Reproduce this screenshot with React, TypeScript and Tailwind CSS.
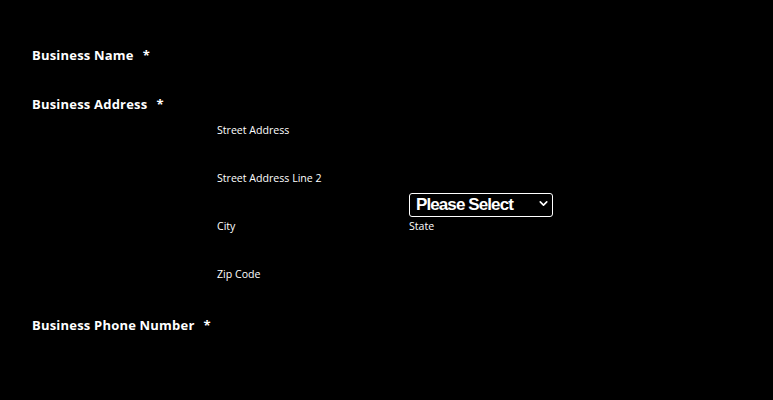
import { ChevronDown } from "lucide-react";

const labelCls = "w-[185px] shrink-0 text-[13px] leading-[14px] font-bold text-white tracking-[0.2px]";
const subCls = "mt-[3px] text-[10.6px] leading-[12px] text-white";

function Req() {
  return <span className="ml-[9px]">*</span>;
}

function SubField({ label, w = "w-[180px]" }: { label: string; w?: string }) {
  return (
    <div className="flex flex-col">
      <input className={`${w} h-[24px] bg-black outline-none`} />
      <span className={subCls}>{label}</span>
    </div>
  );
}

export default function App() {
  return (
    <div
      className="w-[773px] h-[400px] bg-black text-white pl-[32px] pt-[48px]"
      style={{ fontFamily: '"Open Sans", sans-serif' }}
    >
      {/* Business Name */}
      <div className="flex h-[24px]">
        <label className={labelCls}>
          Business Name
          <Req />
        </label>
        <input className="w-[300px] h-[24px] bg-black outline-none" />
      </div>

      {/* Business Address */}
      <div className="flex mt-[25px]">
        <label className={labelCls}>
          Business Address
          <Req />
        </label>
        <div className="flex flex-col gap-[9px]">
          <SubField label="Street Address" w="w-[336px]" />
          <SubField label="Street Address Line 2" w="w-[336px]" />
          <div className="flex gap-[12px]">
            <SubField label="City" />
            <div className="flex flex-col">
              <div className="relative w-[144px] h-[24px] -mt-px">
                <select
                  className="w-full h-full appearance-none bg-black text-white border border-white rounded-[3px] pl-[6px] text-[17px] leading-[20px] tracking-[-0.9px] font-bold outline-none"
                  style={{ fontFamily: '"Liberation Sans", Arial, sans-serif' }}
                >
                  <option>Please Select</option>
                </select>
                <ChevronDown
                  size={13}
                  strokeWidth={3}
                  className="absolute right-[3px] top-[5px] pointer-events-none"
                />
              </div>
              <span className="mt-[4px] text-[10.6px] leading-[12px] text-white">State</span>
            </div>
          </div>
          <SubField label="Zip Code" />
        </div>
      </div>

      {/* Business Phone Number */}
      <div className="flex mt-[38px]">
        <label className={labelCls}>
          Business Phone Number
          <Req />
        </label>
      </div>
    </div>
  );
}
